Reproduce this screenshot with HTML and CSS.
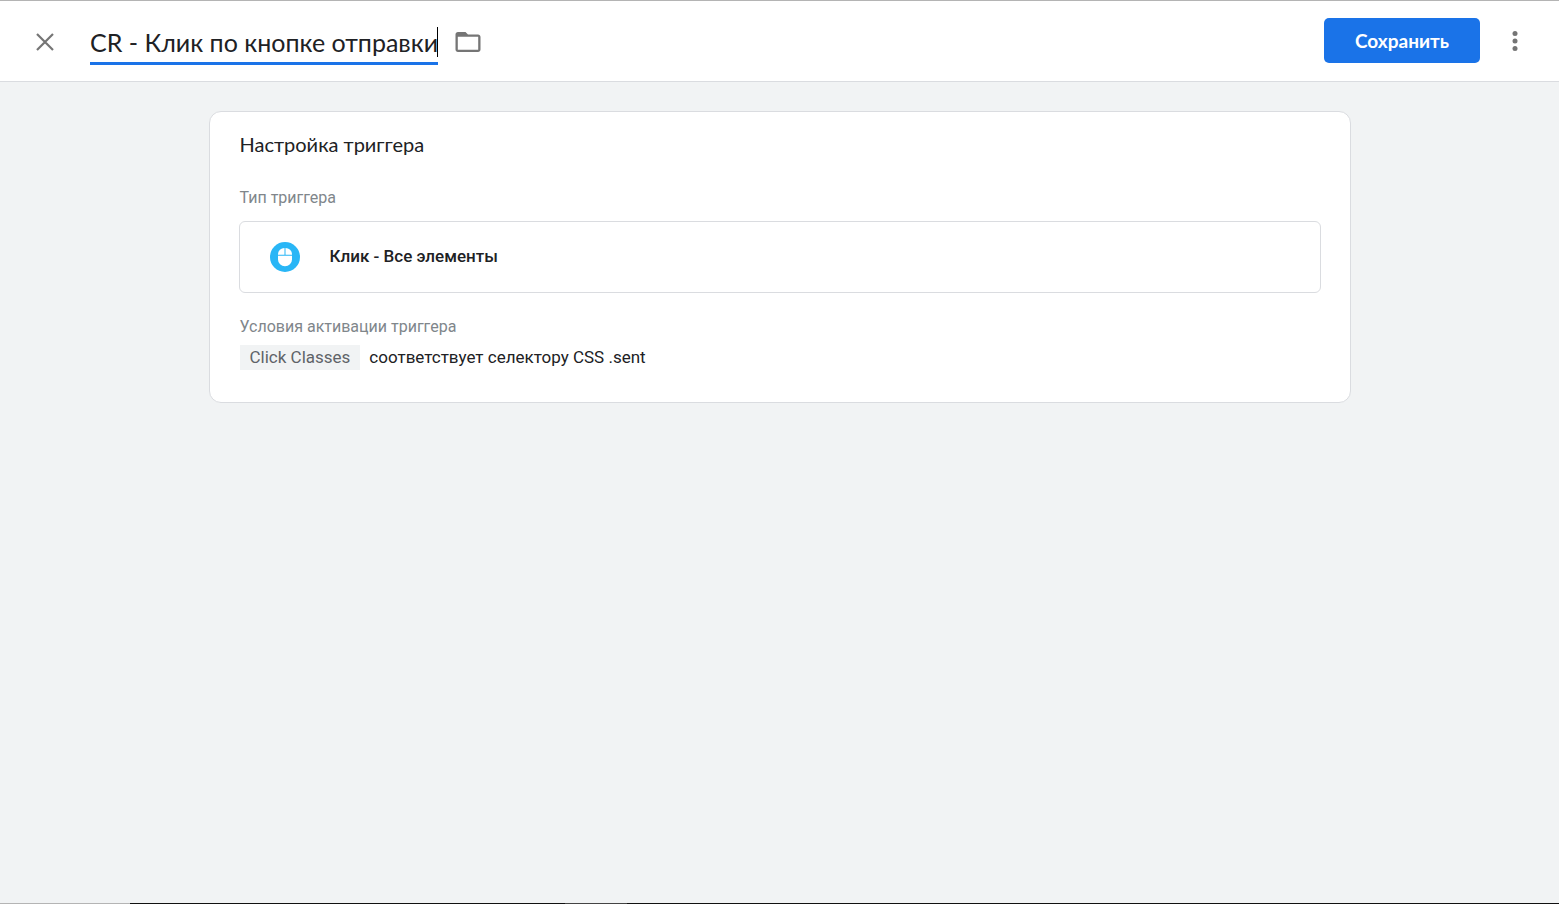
FILE: index.html
```html
<!DOCTYPE html>
<html lang="ru">
<head>
  <meta charset="UTF-8">
  <meta name="viewport" content="width=device-width, initial-scale=1.0">
  <title>Настройка триггера</title>
  <link rel="stylesheet" href="styles.css">
</head>
<body>
  <header class="topbar">
    <button type="button" class="icon-btn" aria-label="Закрыть">
      <svg width="30" height="30" viewBox="0 0 30 30"><path d="M7 8L23 24M23 8L7 24" fill="none" stroke="#757575" stroke-width="2.200"/></svg>
    </button>
    <div class="title-field">
      <input type="text" class="title-input" aria-label="Название триггера" value="CR - Клик по кнопке отправки">
      <span class="caret"></span>
    </div>
    <button type="button" class="icon-btn" aria-label="Папка">
      <svg width="30" height="30" viewBox="0 0 30 30" fill="#757575"><path d="M5 6C3.500 6 2.500 7 2.500 8.500v15C2.500 25 3.500 26 5 26h20c1.500 0 2.500-1 2.500-2.500V11c0-1.500-1-2.500-2.500-2.500H15L12.500 6H5zM4.800 10.800h20.400v12.900H4.800z" fill-rule="evenodd"/></svg>
    </button>
    <button type="button" class="save-btn">Сохранить</button>
    <button type="button" class="icon-btn" aria-label="Ещё">
      <svg width="30" height="30" viewBox="0 0 30 30" fill="#757575"><circle cx="15" cy="7.500" r="2.500"/><circle cx="15" cy="15" r="2.500"/><circle cx="15" cy="22.500" r="2.500"/></svg>
    </button>
  </header>
  <main class="content">
    <section class="card">
      <h2>Настройка триггера</h2>
      <div class="label">Тип триггера</div>
      <button type="button" class="trigger-type">
        <svg width="30" height="30" viewBox="0 0 30 30">
          <circle cx="15" cy="15" r="15" fill="#29b6f6"/>
          <path d="M14.500 6v6.700H8V12a6.500 6 0 0 1 6.500-6zM15.500 6v6.700H22V12a6.500 6 0 0 0-6.500-6zM8 13.700h14V17.500a7 6.700 0 0 1-14 0z" fill="#fff"/>
        </svg>
        <span class="trigger-name">Клик - Все элементы</span>
      </button>
      <div class="label">Условия активации триггера</div>
      <div class="condition">
        <span class="chip">Click Classes</span>
        <span>соответствует селектору CSS .sent</span>
      </div>
    </section>
  </main>
  <footer class="strip">
    <span class="strip-light"></span>
    <span class="strip-dark"></span>
    <span class="strip-mid"></span>
    <span class="strip-rest"></span>
  </footer>
</body>
</html>
```
FILE: styles.css
```css
* { box-sizing: border-box; }
body { margin: 0; min-height: 100vh; display: flex; flex-direction: column; background: #f1f3f4; color: #202124; font-family: Roboto, "Noto Sans", sans-serif; font-size: 17px; }
button { font-family: inherit; cursor: pointer; }
.topbar { display: flex; align-items: center; height: 82px; padding: 0 29px 0 30px; background: #fff; border-top: 1px solid #b4b4b4; border-bottom: 1px solid #dadce0; }
.icon-btn { display: flex; width: 30px; height: 30px; padding: 0; border: none; background: none; }
.title-field { position: relative; width: 348px; margin: 8px 15px 0 30px; }
.title-input { display: block; width: 100%; height: 40px; padding: 0 0 4px; border: none; border-bottom: 3px solid #1a73e8; outline: none; background: none; color: #202124; font-family: Lato, Roboto, sans-serif; font-size: 25px; }
.caret { position: absolute; top: 2px; right: 0; width: 1px; height: 30px; background: #000; }
.save-btn { width: 156px; height: 45px; margin: 0 20px 1px auto; padding: 0; border: none; border-radius: 5px; background: #1a73e8; color: #fff; font-family: Lato, Roboto, sans-serif; font-size: 19px; font-weight: 700; }
.content { flex: 1; padding: 29px 208px; }
.card { max-width: 1142px; margin: 0 auto; padding: 18px 29px 32px; background: #fff; border: 1px solid #dadce0; border-radius: 12px; }
h2 { margin: 0 0 28px; font-family: Lato, Roboto, sans-serif; font-size: 20px; font-weight: 400; line-height: 28px; }
.label { padding-left: 1px; color: #80868b; font-size: 16px; line-height: 24px; }
.trigger-type { display: flex; align-items: center; gap: 30px; width: 100%; height: 72px; margin: 11px 0 22px; padding: 0 30px; border: 1px solid #dadce0; border-radius: 6px; background: #fff; color: #202124; font-size: 17px; font-weight: 500; }
.trigger-name { padding-bottom: 3px; }
h2, .condition { padding-left: 1px; }
.condition { display: flex; align-items: center; gap: 9px; margin-top: 6px; line-height: 25px; }
.chip { padding: 0 10px; background: #f1f3f4; color: #5f6368; }
.strip { display: flex; height: 1px; }
.strip-light { width: 130px; background: #b4b4b4; }
.strip-dark { width: 435px; background: #111; }
.strip-mid { width: 62px; background: #444; }
.strip-rest { flex: 1; background: #111; }
```
